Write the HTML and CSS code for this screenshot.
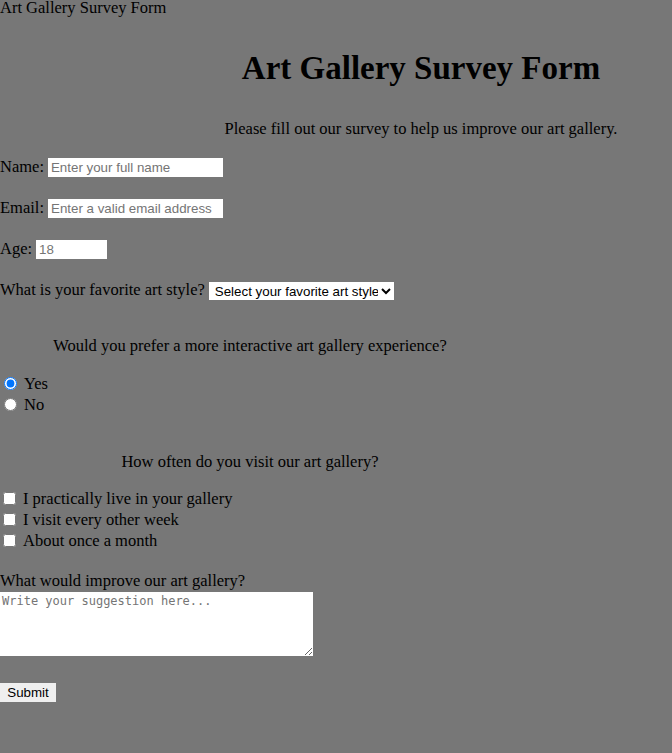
FILE: index.html
```html
<!DOCTYPE html>
<html lang="en">
<head>
<meta charset="utf-8">
<title>Art Gallery Survey Form</title>
<link rel="stylesheet" href="styles.css">
</head>
<body>
<div class="top-title">Art Gallery Survey Form</div>
<header class="header">
  <h1 class="title">Art Gallery Survey Form</h1>
  <p class="description">Please fill out our survey to help us improve our art gallery.</p>
</header>
<form class="survey">
  <div class="row"><label class="lbl" for="name">Name:</label> <input class="field wide" id="name" type="text" placeholder="Enter your full name"></div>
  <div class="row"><label class="lbl" for="email">Email:</label> <input class="field wide" id="email" type="email" placeholder="Enter a valid email address"></div>
  <div class="row"><label class="lbl" for="age">Age:</label> <input class="field narrow" id="age" type="number" placeholder="18"></div>
  <div class="row"><label class="lbl" for="style">What is your favorite art style?</label> <select class="dropdown" id="style"><option>Select your favorite art style</option></select></div>

  <p class="question">Would you prefer a more interactive art gallery experience?</p>
  <div class="options">
    <label class="option"><input class="radio" type="radio" name="interactive" checked> Yes</label>
    <label class="option"><input class="radio" type="radio" name="interactive"> No</label>
  </div>

  <p class="question q2">How often do you visit our art gallery?</p>
  <div class="options opts2">
    <label class="option"><input class="check" type="checkbox"> I practically live in your gallery</label>
    <label class="option"><input class="check" type="checkbox"> I visit every other week</label>
    <label class="option"><input class="check" type="checkbox"> About once a month</label>
  </div>

  <label class="improve" for="improve">What would improve our art gallery?</label>
  <textarea class="textbox" id="improve" placeholder="Write your suggestion here..."></textarea>

  <button class="submit" type="submit">Submit</button>
</form>
</body>
</html>
```
FILE: styles.css
```css
html, body {
  margin: 0;
  padding: 0;
}
body {
  background: #777777;
  font-family: "Liberation Serif", "Times New Roman", serif;
  font-size: 16.5px;
  color: #000;
  min-height: 753px;
}
.top-title {
  line-height: 16px;
  padding-top: 0;
}
.header {
  padding-left: 170px;
  text-align: center;
}
.title {
  font-size: 33px;
  margin: 34px 0 0;
  line-height: 37px;
}
.description {
  margin: 33px 0 0;
  line-height: 18px;
}
.survey {
  margin-top: 20px;
}
.row {
  height: 41px;
  display: flex;
  align-items: flex-start;
  gap: 4px;
}
.lbl {
  line-height: 18px;
}
.field {
  font-family: "Liberation Sans", Arial, sans-serif;
  font-size: 13.33px;
  border: none;
  background: #fff;
  height: 19px;
  padding: 0 3px;
  box-sizing: border-box;
  margin: 0;
  outline: none;
}
.field::placeholder {
  color: #757575;
}
.wide { width: 175px; }
.narrow { width: 71px; }
.dropdown {
  font-family: "Liberation Sans", Arial, sans-serif;
  font-size: 13.33px;
  border: none;
  background: #fff;
  height: 18px;
  margin: 1px 0 0;
  padding: 0 0 0 2px;
  width: 185px;
}
.question {
  width: 500px;
  text-align: center;
  margin: 15px 0 0;
  line-height: 18px;
}
.q2 { margin-top: 38px; }
.options {
  margin-top: 18px;
  display: flex;
  flex-direction: column;
}
.opts2 { margin-top: 17px; }
.option {
  line-height: 21px;
  height: 21px;
  display: flex;
  align-items: center;
  gap: 4px;
}
.radio {
  margin: 0 3px 0 4px;
  width: 13px;
  height: 13px;
}
.check {
  margin: 0 3px 0 3px;
  width: 13px;
  height: 13px;
}
.improve {
  display: block;
  margin-top: 21px;
  margin-bottom: 2px;
  line-height: 18px;
}
.textbox {
  display: block;
  width: 313px;
  height: 64px;
  box-sizing: border-box;
  border: none;
  background: #fff;
  margin: 0;
  padding: 2px;
  font-family: "DejaVu Sans Mono", monospace;
  font-size: 12px;
}
.textbox::placeholder { color: #757575; }
.submit {
  display: block;
  margin-top: 27px;
  font-family: "Liberation Sans", Arial, sans-serif;
  font-size: 13.33px;
  background: #efefef;
  border: none;
  height: 19px;
  width: 56px;
  padding: 0;
}
```
